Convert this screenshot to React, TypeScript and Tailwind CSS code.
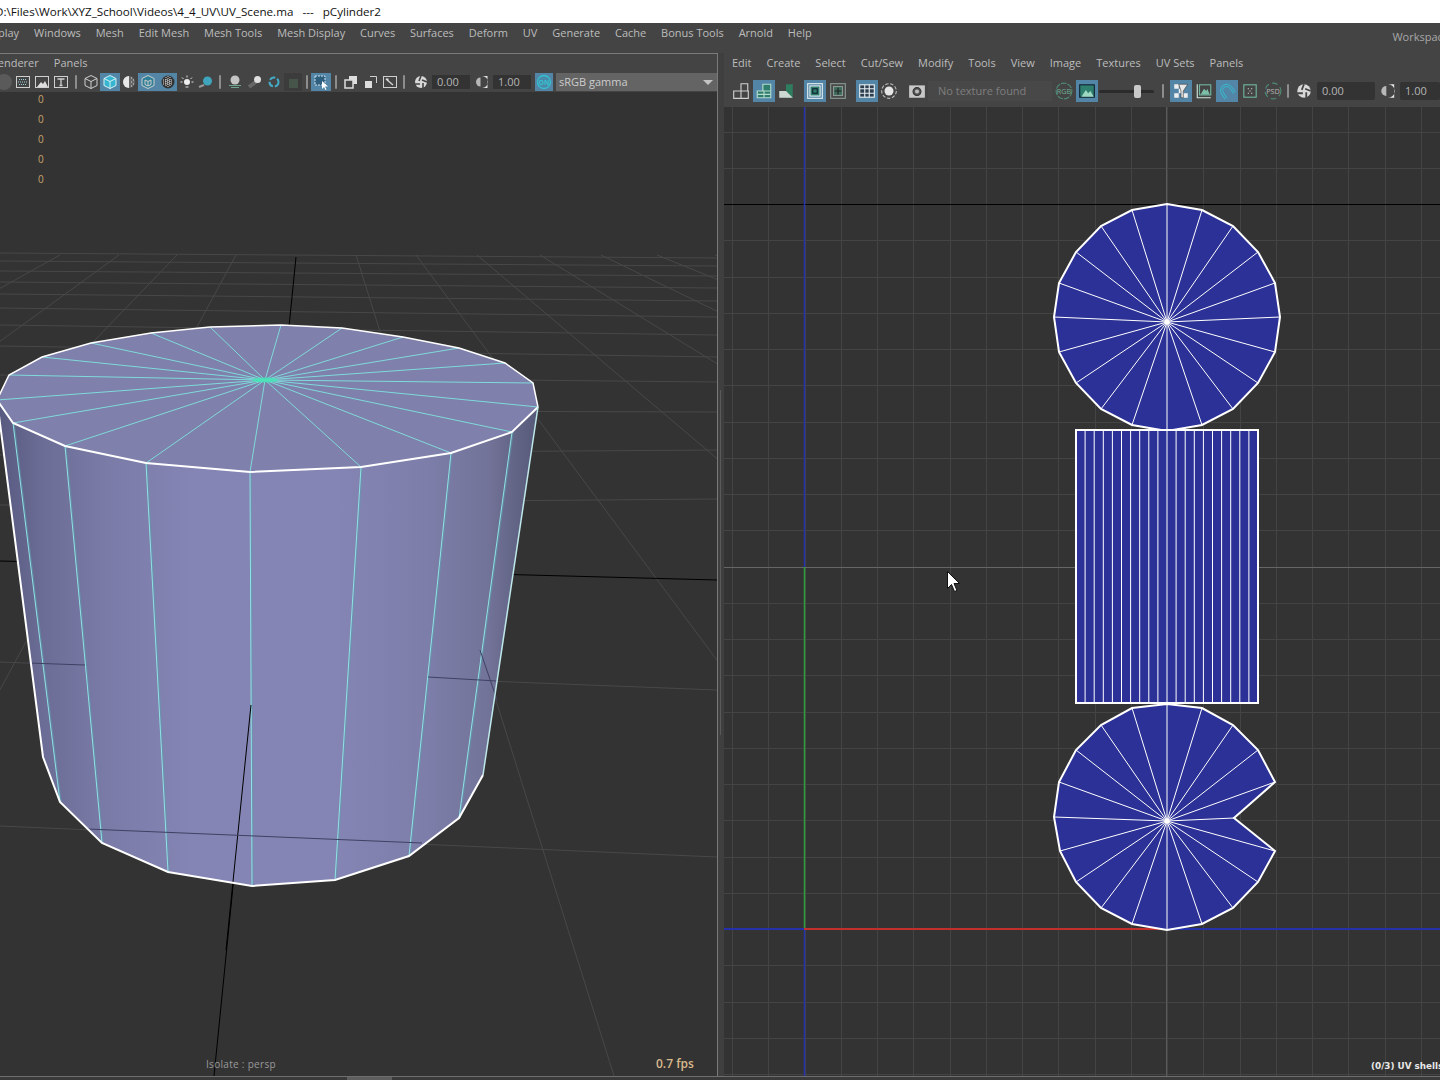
import type { ReactNode } from 'react';

type Pt = [number, number];

const toPoints = (pts: Pt[]) => pts.map((p) => p.join(',')).join(' ');

// top cap of the cylinder, going clockwise from the left edge
const capRim: Pt[] = [
  [-3, 400], [9, 375], [42, 357], [91, 343], [151, 333], [210, 327], [281, 325], [342, 328], [403, 337], [459, 348],
  [505, 363], [533, 383], [538, 407], [512, 432], [451, 453], [361, 467], [250, 472], [146, 463], [65, 446], [13, 423],
];
const capCenter: Pt = [265, 380];

const bottomRim: Pt[] = [[43, 757], [60, 802], [102, 843], [168, 872], [252, 886], [335, 880], [409, 856], [459, 818], [483, 775]];
const seams: [Pt, Pt][] = [
  [[13, 423], [60, 802]],
  [[65, 446], [102, 843]],
  [[146, 463], [168, 872]],
  [[250, 472], [252, 886]],
  [[361, 467], [335, 880]],
  [[451, 453], [409, 856]],
  [[512, 432], [459, 818]],
];

const floorLeft = [253, 261, 271, 282, 294, 308, 325, 346, 375, 410, 455, 505, 662, 826];
const floorRight = [258, 266, 276, 288, 301, 317, 335, 357, 382, 412, 450, 499, 690, 857];
const vanish: Pt = [312, 101];
const floorTops = [0, 60, 119, 177, 236, 356, 416, 477, 540, 601, 657, 715];

const topDisc: Pt[] = [
  [1167, 204], [1202, 210], [1233, 226], [1258, 252], [1275, 283], [1280, 317], [1275, 352], [1258, 383], [1233, 409], [1202, 425],
  [1167, 431], [1132, 425], [1101, 409], [1076, 383], [1059, 352], [1054, 317], [1059, 283], [1076, 252], [1101, 226], [1132, 210],
];
const bottomDisc: Pt[] = [
  [1167, 704], [1202, 708], [1233, 725], [1258, 750], [1275, 782], [1234, 818], [1275, 851], [1258, 882], [1233, 908], [1202, 924],
  [1167, 930], [1132, 924], [1101, 908], [1076, 882], [1060, 851], [1054, 817], [1059, 782], [1076, 750], [1101, 725], [1132, 708],
];

const uvGridX = Array.from({ length: 20 }, (_, i) => Math.round(732 + i * 36.25) + 0.5);
const uvGridY = Array.from({ length: 27 }, (_, i) => Math.round(131.5 + i * 36.25) + 0.5).filter((y) => y !== 929.5);
const stripX = Array.from({ length: 19 }, (_, i) => 1085.1 + i * 9.1);

function Disc({ pts, center }: { pts: Pt[]; center: Pt }) {
  return (
    <g>
      <polygon points={toPoints(pts)} fill="#2b3196" />
      {pts.map((p, i) => (
        <line key={i} x1={p[0]} y1={p[1]} x2={center[0]} y2={center[1]} stroke="#fff" strokeWidth="1" />
      ))}
      <polygon points={toPoints(pts)} fill="none" stroke="#fff" strokeWidth="2" />
      <circle cx={center[0]} cy={center[1]} r="2.5" fill="#fff" />
    </g>
  );
}

function PerspectiveView() {
  return (
    <svg viewBox="0 92 717 984" className="block h-full w-full">
      <defs>
        <linearGradient id="side" x1="0" y1="0" x2="540" y2="0" gradientUnits="userSpaceOnUse">
          <stop offset="0" stopColor="#585a80" />
          <stop offset="0.08" stopColor="#6c6d96" />
          <stop offset="0.2" stopColor="#7a7ba7" />
          <stop offset="0.36" stopColor="#8485b4" />
          <stop offset="0.62" stopColor="#8485b4" />
          <stop offset="0.8" stopColor="#7c7da8" />
          <stop offset="0.9" stopColor="#737499" />
          <stop offset="1" stopColor="#555877" />
        </linearGradient>
      </defs>

      {floorLeft.map((y, i) => (
        <line key={y} x1="0" y1={y} x2="717" y2={floorRight[i]} stroke="#484848" strokeWidth="1" />
      ))}
      {floorTops.map((x) => (
        <line
          key={x}
          x1={x}
          y1={255}
          x2={x + ((x - vanish[0]) / 154) * 821 * 1.1}
          y2={1076}
          stroke="#484848"
          strokeWidth="1"
        />
      ))}
      <line x1="0" y1="561" x2="717" y2="580" stroke="#000" strokeWidth="1" />
      <line x1="296" y1="257" x2="214" y2="1076" stroke="#000" strokeWidth="1" />

      <polygon points={toPoints([[-3, 400], ...bottomRim, [538, 407]])} fill="url(#side)" />
      {seams.map(([a, b], i) => (
        <g key={i}>
          <line x1={a[0] + 1} y1={a[1]} x2={b[0] + 1} y2={b[1]} stroke="#5c9fb0" strokeWidth="1.5" opacity="0.5" />
          <line x1={a[0]} y1={a[1]} x2={b[0]} y2={b[1]} stroke="#8fe3e3" strokeWidth="1" />
        </g>
      ))}

      {/* lines seen through the mesh */}
      <line x1="251" y1="705" x2="226" y2="950" stroke="#000" strokeWidth="1" />
      <line x1="28" y1="663" x2="85" y2="665" stroke="#3f4163" strokeWidth="1" />
      <line x1="428" y1="677" x2="497" y2="681" stroke="#3f4163" strokeWidth="1" />
      <line x1="87" y1="829" x2="422" y2="843" stroke="#3f4163" strokeWidth="1" />
      <line x1="480" y1="650" x2="497" y2="700" stroke="#3f4163" strokeWidth="1" />

      <polygon points={toPoints(capRim)} fill="#7f80ab" />
      {capRim.map((p, i) => (
        <line key={i} x1={p[0]} y1={p[1]} x2={capCenter[0]} y2={capCenter[1]} stroke="#7fe4e0" strokeWidth="0.9" />
      ))}
      <ellipse cx={capCenter[0]} cy={capCenter[1]} rx="13" ry="2.5" fill="#45e0b4" opacity="0.85" />

      <polyline points={toPoints(capRim.slice(0, 13))} fill="none" stroke="#fff" strokeWidth="1.5" />
      <polyline points={toPoints([...capRim.slice(12), capRim[0]])} fill="none" stroke="#fff" strokeWidth="2" />
      <polyline points={toPoints([[-3, 400], ...bottomRim])} fill="none" stroke="#fff" strokeWidth="2" />
      <line x1="538" y1="407" x2="483" y2="775" stroke="#bfe8ea" strokeWidth="1.5" />
    </svg>
  );
}

function UvEditor() {
  return (
    <svg viewBox="724 107 716 969" className="block h-full w-full">
      {uvGridX.map((x) => (
        <line key={x} x1={x} y1="107" x2={x} y2="1076" stroke="#444" strokeWidth="1" />
      ))}
      {uvGridY.map((y) => (
        <line key={y} x1="724" y1={y} x2="1440" y2={y} stroke="#444" strokeWidth="1" />
      ))}
      <line x1="1166.5" y1="107" x2="1166.5" y2="1076" stroke="#5a5a5a" strokeWidth="1" />
      <line x1="724" y1="567.5" x2="1440" y2="567.5" stroke="#666" strokeWidth="1" />
      <line x1="724" y1="204.5" x2="1440" y2="204.5" stroke="#000" strokeWidth="1" />
      <line x1="804.5" y1="107" x2="804.5" y2="567" stroke="#2531a8" strokeWidth="1.5" />
      <line x1="804.5" y1="567" x2="804.5" y2="929" stroke="#2f9d3a" strokeWidth="1.5" />
      <line x1="804.5" y1="929" x2="804.5" y2="1076" stroke="#2531a8" strokeWidth="1.5" />
      <line x1="724" y1="929" x2="804" y2="929" stroke="#2531a8" strokeWidth="2" />
      <line x1="804" y1="929" x2="1166" y2="929" stroke="#c2302b" strokeWidth="2" />
      <line x1="1166" y1="929" x2="1440" y2="929" stroke="#2531a8" strokeWidth="2" />

      <Disc pts={topDisc} center={[1167, 322]} />
      <rect x="1076" y="430" width="182" height="273" fill="#2b3196" />
      {stripX.map((x) => (
        <line key={x} x1={x} y1="430" x2={x} y2="703" stroke="#fff" strokeWidth="1" />
      ))}
      <rect x="1076" y="430" width="182" height="273" fill="none" stroke="#fff" strokeWidth="2" />
      <Disc pts={bottomDisc} center={[1167, 821]} />

      <path d="M947.5 571.5v17l4-4 3 7 2.5-1-3-7h5.5z" fill="#fff" stroke="#111" strokeWidth="1" />
    </svg>
  );
}

function Ico({ children }: { children: ReactNode }) {
  return (
    <svg viewBox="0 0 16 16" className="h-4 w-4 shrink-0" fill="none" stroke="#cfcfcf" strokeWidth="1">
      {children}
    </svg>
  );
}

function Btn({ w, on, tall, children }: { w: string; on?: boolean; tall?: boolean; children?: ReactNode }) {
  return (
    <div
      className={`flex shrink-0 items-center justify-center ${w} ${on ? 'bg-[#5285a6]' : ''} ${
        tall ? 'h-[22px] [&>svg]:h-[18px] [&>svg]:w-[18px]' : 'h-[18px]'
      }`}
    >
      {children}
    </div>
  );
}

function Sep({ w }: { w: string }) {
  return (
    <div className={`flex h-[18px] shrink-0 items-center justify-center ${w}`}>
      <div className="h-[14px] w-[2px] rounded-full bg-[#8d8d8d]" />
    </div>
  );
}

function NumberField({ value, w }: { value: string; w: string }) {
  return <div className={`flex h-[14px] shrink-0 items-center bg-[#333] pl-[5px] text-[11px] text-[#b5b5b5] ${w}`}>{value}</div>;
}

const Aperture = () => (
  <Ico>
    <circle cx="8" cy="8" r="6" fill="#d8d8d8" stroke="none" />
    <path d="M8 2 6 7M14 8 9 6M10 14 10 9M2 10 7 10" stroke="#444" strokeWidth="1.6" />
  </Ico>
);
const Contrast = () => (
  <Ico>
    <path d="M6.500 3.500a4.500 4.500 0 0 0 0 9z" fill="#b8b8b8" stroke="none" />
    <path d="M8 2h5.500v12H8a6 6 0 0 0 0-12z" fill="#e4e4e4" stroke="none" />
  </Ico>
);
const Mountain = ({ on }: { on?: boolean }) => (
  <Ico>
    <rect x="1.5" y="2.5" width="13" height="11" fill={on ? '#2f7f6f' : 'none'} stroke={on ? '#123' : '#6fb59f'} />
    <path d="M3 13l4-6 2 3 2-2 3 5z" fill={on ? '#9fd8c0' : '#5ea68d'} stroke="none" />
  </Ico>
);

function LeftToolbar() {
  return (
    <div className="flex h-5 shrink-0 items-center">
      <Btn w="w-[13px]">
        <div className="-ml-[6px] h-4 w-4 rounded-full bg-[#5a5a5a]" />
      </Btn>
      <Btn w="w-[19px]">
        <Ico>
          <rect x="1.5" y="2.5" width="13" height="11" />
          <path d="M3 8h10M4 5.5h8M4 10.500h8" strokeDasharray="1 1" stroke="#9ad0d8" />
        </Ico>
      </Btn>
      <Btn w="w-[19px]">
        <Ico>
          <rect x="1.5" y="2.500" width="13" height="11" />
          <path d="M3 13l4-5 2 2 2-3 3 6z" fill="#ddd" stroke="none" />
        </Ico>
      </Btn>
      <Btn w="w-[19px]">
        <Ico>
          <rect x="1.5" y="2.500" width="13" height="11" />
          <path d="M4.500 5h7M8 5v6.500M6.500 11.500h3" strokeWidth="1.300" />
        </Ico>
      </Btn>
      <Sep w="w-[11px]" />
      <Btn w="w-[19px]">
        <Ico>
          <path d="M8 1.500 14 4.500v7l-6 3-6-3v-7zM2 4.500l6 3 6-3M8 7.500v7" />
        </Ico>
      </Btn>
      <Btn w="w-[20px]" on>
        <Ico>
          <path d="M8 1.500 14 4.500v7l-6 3-6-3v-7z" fill="#35b5cf" stroke="#d8f0f4" />
          <path d="M2 4.500l6 3 6-3M8 7.500v7" stroke="#d8f0f4" />
        </Ico>
      </Btn>
      <Btn w="w-[18px]">
        <Ico>
          <circle cx="8" cy="8" r="6" fill="#666" stroke="none" />
          <path d="M8 2a6 6 0 0 0 0 12z" fill="#e8e8e8" stroke="none" />
          <path d="M10 4h1M12 6h1M10 8h1M12 10h1M10 12h1" stroke="#ddd" />
        </Ico>
      </Btn>
      <Btn w="w-[20px]" on>
        <Ico>
          <path d="M8 1.500 14 4.500v7l-6 3-6-3v-7z" fill="#2f7f96" />
          <path d="M5 6l3 1.500 3-1.500v4.500l-3 1.500-3-1.500zM8 7.500V12" />
        </Ico>
      </Btn>
      <Btn w="w-[19px]" on>
        <Ico>
          <circle cx="8" cy="8" r="6.500" fill="#333" stroke="none" />
          <path d="M3 6h10M3 8h10M3 10h10M6 3v10M8 2v12M10 3v10" stroke="#ddd" strokeDasharray="1 1" />
        </Ico>
      </Btn>
      <Btn w="w-[19px]">
        <Ico>
          <circle cx="8" cy="8" r="3" fill="#eee" stroke="none" />
          <path d="M8 1.500v2M3 3.500l1.500 1.500M13 3.500 11.500 5M1.500 8h2M12.500 8h2M6.500 13h3" stroke="#ddd" />
        </Ico>
      </Btn>
      <Btn w="w-[19px]">
        <Ico>
          <circle cx="9.500" cy="7" r="4.500" fill="#3fa5bd" stroke="none" />
          <path d="M1 13l5-2" stroke="#999" strokeWidth="2" />
        </Ico>
      </Btn>
      <Sep w="w-[10px]" />
      <Btn w="w-[20px]">
        <Ico>
          <circle cx="8" cy="6" r="4.500" fill="#c5c5c5" stroke="none" />
          <path d="M2 11.500h12M4 13.500h8" stroke="#6fa58f" />
        </Ico>
      </Btn>
      <Btn w="w-[19px]">
        <Ico>
          <path d="M2 13l8-6" stroke="#666" strokeWidth="4" />
          <circle cx="10.500" cy="5.500" r="3.500" fill="#e0e0e0" stroke="none" />
        </Ico>
      </Btn>
      <Btn w="w-[19px]">
        <Ico>
          <circle cx="8" cy="8" r="4.500" stroke="#45abc8" strokeWidth="2" strokeDasharray="6 2" />
        </Ico>
      </Btn>
      <Btn w="w-[19px]">
        <div className="h-[18px] w-[18px] bg-[#3c3c3c]">
          <div className="ml-[5px] mt-[6px] h-[9px] w-[9px] bg-[#465449]" />
        </div>
      </Btn>
      <Sep w="w-[9px]" />
      <Btn w="w-[20px]" on>
        <Ico>
          <rect x="2" y="2" width="10" height="9" fill="#2e5f7e" stroke="#cfe0ea" strokeDasharray="2 1" />
          <path d="M9 7v8l2-2 1.500 3 1-.5-1.500-3h3z" fill="#fff" stroke="none" />
        </Ico>
      </Btn>
      <Sep w="w-[10px]" />
      <Btn w="w-[20px]">
        <Ico>
          <rect x="6" y="2" width="8" height="8" fill="#ddd" stroke="none" />
          <rect x="2" y="6" width="8" height="8" fill="#444" stroke="#ddd" strokeWidth="1.500" />
        </Ico>
      </Btn>
      <Btn w="w-[20px]">
        <Ico>
          <path d="M7 2.500h6.500V9" />
          <rect x="2" y="7" width="7" height="7" fill="#ddd" stroke="none" />
        </Ico>
      </Btn>
      <Btn w="w-[18px]">
        <Ico>
          <rect x="1.500" y="2.500" width="13" height="11" />
          <path d="M4 5l7 6" strokeWidth="1.500" />
          <path d="M3.500 4.500h3v3z" fill="#ddd" stroke="none" />
        </Ico>
      </Btn>
      <Sep w="w-[10px]" />
      <Btn w="w-[23px]">
        <Aperture />
      </Btn>
      <NumberField value="0.00" w="w-[38px]" />
      <Btn w="w-[23px]">
        <Contrast />
      </Btn>
      <NumberField value="1.00" w="w-[38px]" />
      <Btn w="w-[25px]">
        <div className="flex h-[18px] w-[18px] items-center justify-center bg-[#5285a6]">
          <svg viewBox="0 0 16 16" className="h-4 w-4">
            <circle cx="8" cy="8" r="6.500" fill="#4a8aa8" stroke="#35c0d0" strokeWidth="1.300" />
            <text x="8" y="10.500" textAnchor="middle" fontSize="6.500" fontWeight="700" fontFamily="Open Sans, sans-serif" fill="#35c0d0">
              ON
            </text>
          </svg>
        </div>
      </Btn>
      <div className="flex h-[18px] flex-1 items-center justify-between bg-[#646464] pl-[3px] pr-[4px] text-[11px] text-[#cdcdcd]">
        <span>sRGB gamma</span>
        <div className="h-0 w-0 border-x-[5px] border-t-[5px] border-x-transparent border-t-[#c4c4c4]" />
      </div>
    </div>
  );
}

function RightToolbar() {
  return (
    <div className="h-[34px] shrink-0 pt-[7px] pl-[5px]">
      <div className="flex h-[22px] items-center">
        <Btn tall w="w-[24px]">
          <Ico>
            <path d="M8 1.500h6v6.500H8zM1.500 8H8v6.500H1.500zM8 8h6.500v6.500H8z" />
          </Ico>
        </Btn>
        <Btn tall w="w-[22px]" on>
          <Ico>
            <path d="M7 2h7v12H2V8h5z" fill="#2f7d6d" stroke="#b5dccd" />
            <path d="M2 11h12M7 8h7M8 8v6" stroke="#b5dccd" />
          </Ico>
        </Btn>
        <Btn tall w="w-[22px]">
          <Ico>
            <path d="M8 2h6v12H8z" fill="#2f7d5f" stroke="none" />
            <path d="M2 8h6v6H2z" fill="#cdd8d2" stroke="none" />
            <path d="M8 8l6 6H8z" fill="#cdd8d2" stroke="none" />
          </Ico>
        </Btn>
        <div className="w-[7px] shrink-0" />
        <Btn tall w="w-[22px]" on>
          <Ico>
            <rect x="1.500" y="1.500" width="13" height="13" stroke="#e3eef0" />
            <rect x="3.500" y="3.500" width="9" height="9" fill="#2f7d6d" stroke="#e3eef0" />
            <rect x="6" y="6" width="4" height="4" stroke="#123" />
          </Ico>
        </Btn>
        <Btn tall w="w-[24px]">
          <Ico>
            <rect x="1.500" y="1.500" width="13" height="13" stroke="#8a9a92" />
            <rect x="4" y="4" width="8" height="8" fill="#3d6b5a" stroke="#8a9a92" />
            <path d="M8 5v6M5 8h6" stroke="#222" />
          </Ico>
        </Btn>
        <div className="w-[6px] shrink-0" />
        <Btn tall w="w-[22px]" on>
          <Ico>
            <rect x="1.500" y="2.500" width="13" height="11" fill="#2d3f4e" stroke="#e6eef2" />
            <path d="M1.500 6h13M1.500 10h13M6 2.500v11M10 2.500v11" stroke="#e6eef2" />
          </Ico>
        </Btn>
        <Btn tall w="w-[22px]">
          <Ico>
            <circle cx="8" cy="8" r="6.500" stroke="#bbb" strokeDasharray="3 1.500" />
            <circle cx="8" cy="8" r="4" fill="#e6e6e6" stroke="none" />
          </Ico>
        </Btn>
        <div className="w-[6px] shrink-0" />
        <Btn tall w="w-[22px]">
          <Ico>
            <rect x="1" y="3" width="14" height="11" fill="#c8c8c8" stroke="none" />
            <circle cx="8" cy="8.500" r="3.500" fill="#555" stroke="#333" />
            <circle cx="8" cy="8.500" r="1.800" fill="#bbb" stroke="none" />
          </Ico>
        </Btn>
        <div className="flex h-[20px] w-[124px] shrink-0 items-center bg-[#484848] pl-[10px] text-[11px] text-[#7e7e7e]">
          No texture found
        </div>
        <Btn tall w="w-[24px]">
          <svg viewBox="0 0 16 16">
            <circle cx="8" cy="8" r="7" fill="none" stroke="#4e8a72" strokeDasharray="5 1" />
            <text x="8" y="10.500" textAnchor="middle" fontSize="6.500" fontFamily="Open Sans, sans-serif" fill="#6fae94">
              RGB
            </text>
          </svg>
        </Btn>
        <Btn tall w="w-[22px]" on>
          <Mountain on />
        </Btn>
        <div className="flex h-[18px] w-[57px] shrink-0 items-center px-px">
          <div className="relative h-[3px] w-full rounded-full bg-[#2b2b2b]">
            <div className="absolute left-[35px] top-[-5px] h-[13px] w-[7px] rounded-[2px] bg-[#c9c9c9]" />
          </div>
        </div>
        <Sep w="w-[15px]" />
        <Btn tall w="w-[22px]" on>
          <Ico>
            <path d="M2 2h4v4H2zM6 6h4v4H6zM2 10h4v4H2zM10 10h4v4h-4z" fill="#eee" stroke="none" />
            <path d="M6 2h8l-4 6v6H8V8z" fill="#e8e8e8" stroke="#333" strokeWidth="0.500" />
          </Ico>
        </Btn>
        <Btn tall w="w-[24px]">
          <Ico>
            <path d="M2 2v12h12" stroke="#cfe6da" />
            <rect x="4" y="2.500" width="10" height="9" stroke="#6fb59f" />
            <path d="M5 11l3-5 2 2 1-2 2 5z" fill="#7cc0a8" stroke="none" />
          </Ico>
        </Btn>
        <Btn tall w="w-[22px]" on>
          <Ico>
            <g transform="rotate(-35 8 8)">
              <path d="M3.500 13V7.500a4.500 4.500 0 0 1 9 0V13" stroke="#3eb1c6" strokeWidth="3" />
              <path d="M3.500 13V7.500a4.500 4.500 0 0 1 9 0V13" stroke="#5285a6" strokeWidth="1" />
            </g>
          </Ico>
        </Btn>
        <Btn tall w="w-[23px]">
          <Ico>
            <rect x="2.500" y="2.500" width="11" height="11" stroke="#6fb59f" />
            <path d="M6 6h1M9 6h1M7.500 8h1M6 10h1M9 10h1" stroke="#ddd" />
          </Ico>
        </Btn>
        <Btn tall w="w-[23px]">
          <svg viewBox="0 0 16 16">
            <circle cx="8" cy="8" r="7" fill="none" stroke="#4e8a72" strokeDasharray="5 3" />
            <text x="8" y="10.500" textAnchor="middle" fontSize="6.500" fontFamily="Open Sans, sans-serif" fill="#b5b5b5">
              PSD
            </text>
          </svg>
        </Btn>
        <Sep w="w-[7px]" />
        <Btn tall w="w-[26px]">
          <Aperture />
        </Btn>
        <div className="flex h-[18px] w-[58px] shrink-0 items-center rounded-[2px] bg-[#333] pl-[5px] text-[11px] text-[#b5b5b5]">0.00</div>
        <Btn tall w="w-[25px]">
          <Contrast />
        </Btn>
        <div className="flex h-[18px] w-[40px] shrink-0 items-center rounded-[2px] bg-[#333] pl-[5px] text-[11px] text-[#b5b5b5]">1.00</div>
      </div>
    </div>
  );
}

const mainMenu = ['Windows', 'Mesh', 'Edit Mesh', 'Mesh Tools', 'Mesh Display', 'Curves', 'Surfaces', 'Deform', 'UV', 'Generate', 'Cache', 'Bonus Tools', 'Arnold', 'Help'];
const uvMenu = ['Edit', 'Create', 'Select', 'Cut/Sew', 'Modify', 'Tools', 'View', 'Image', 'Textures', 'UV Sets', 'Panels'];
const statRows = [0, 1, 2, 3, 4];

export default function App() {
  return (
    <div className="flex h-[1080px] w-[1440px] flex-col overflow-hidden bg-[#444] font-['Open_Sans',sans-serif] text-[11px] text-[#bcbcbc]">
      <div className="h-[23px] shrink-0 overflow-hidden whitespace-pre bg-white pl-0 text-[11.640px] leading-[23px] text-[#111]">
        <span className="-ml-[5px] inline-block">{'D:\\Files\\Work\\XYZ_School\\Videos\\4_4_UV\\UV_Scene.ma   ---   pCylinder2'}</span>
      </div>

      <div className="flex h-[30px] shrink-0 items-start gap-[14.900px] overflow-hidden pt-[2px] leading-[16px]">
        <span className="-ml-[18px]">Display</span>
        {mainMenu.map((m) => (
          <span key={m} className="whitespace-pre">
            {m}
          </span>
        ))}
        <span className="ml-auto -mr-[9px] pt-[4px] text-[#a8a8a8]">Workspace</span>
      </div>

      <div className="flex min-h-0 flex-1">
        <div className="flex w-[718px] shrink-0 flex-col border-r border-t border-[#7a7a7a]">
          <div className="flex h-[18px] shrink-0 items-center gap-[15px] overflow-hidden">
            <span className="-ml-[9px]">Renderer</span>
            <span>Panels</span>
          </div>
          <LeftToolbar />
          <div className="relative min-h-0 flex-1 bg-[#333]">
            <PerspectiveView />
            <div className="absolute left-[38px] top-[0px] flex flex-col text-[10px] text-[#c9a36b]">
              {statRows.map((r) => (
                <span key={r} className="h-5 leading-[15px]">
                  0
                </span>
              ))}
            </div>
            <span className="absolute left-[206px] top-[965px] text-[10px] tracking-[0.3px] text-[#9a9a9a]">Isolate : persp</span>
            <span className="absolute left-[656px] top-[963px] text-[12px] font-semibold text-[#d9b88c]">0.7 fps</span>
          </div>
        </div>

        <div className="relative w-[6px] shrink-0 bg-[#3f3f3f]">
          <div className="absolute left-[2px] top-[337px] h-[345px] w-px bg-[#5a5a5a]" />
        </div>

        <div className="flex min-w-0 flex-1 flex-col">
          <div className="flex h-[20px] shrink-0 items-center gap-[15px] pl-[8px]">
            {uvMenu.map((m) => (
              <span key={m} className="whitespace-pre">
                {m}
              </span>
            ))}
          </div>
          <RightToolbar />
          <div className="relative min-h-0 flex-1 overflow-hidden bg-[#333]">
            <UvEditor />
            <span className="absolute left-[647px] top-[953px] whitespace-nowrap font-['DejaVu_Sans',sans-serif] text-[8.800px] font-bold text-[#e8e8e8]">
              (0/3) UV shells
            </span>
          </div>
        </div>
      </div>

      <div className="flex h-[4px] shrink-0 border-t border-[#6e6e6e] bg-[#3a3a3a]">
        <div className="ml-[347px] h-full w-[45px] bg-[#5e5e5e]" />
      </div>
    </div>
  );
}
